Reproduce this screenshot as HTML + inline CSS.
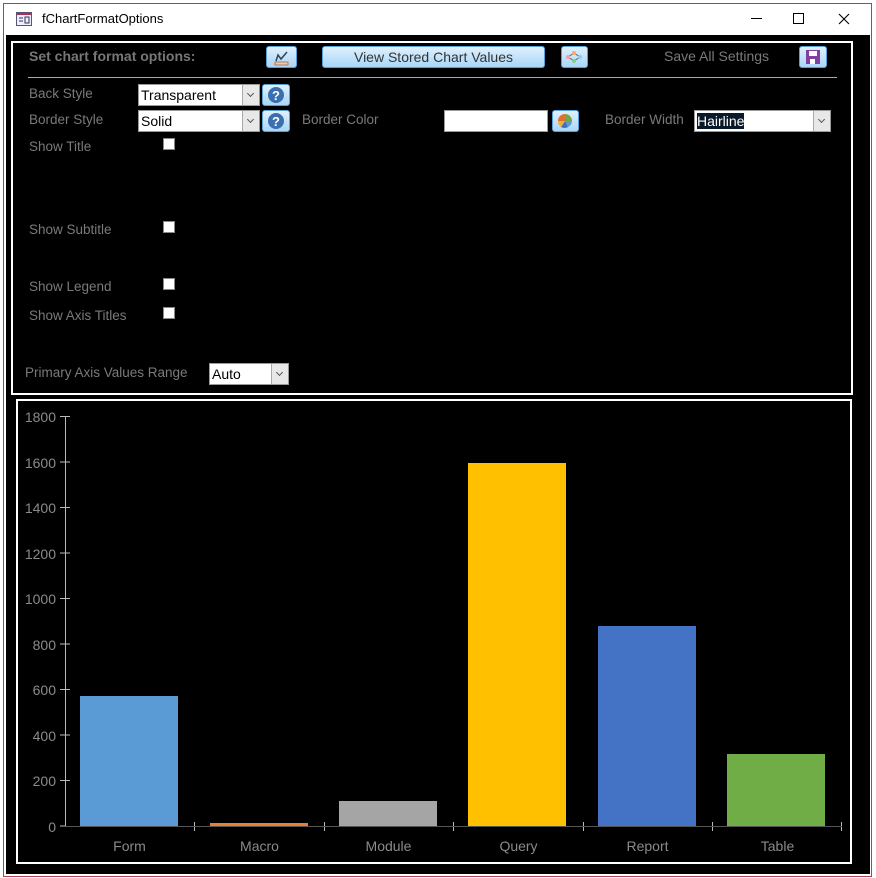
<!DOCTYPE html>
<html><head><meta charset="utf-8"><style>
*{margin:0;padding:0;box-sizing:border-box}
body{width:876px;height:878px;background:#fff;position:relative;overflow:hidden;font-family:"Liberation Sans",sans-serif}
.a{position:absolute}
.lbl{position:absolute;color:#7a7a7a;font-size:13.5px;white-space:nowrap}
.cb{position:absolute;width:12px;height:12px;background:#fff;border:1px solid #888}
.sel{position:absolute;background:#fff;border:1px solid #999;height:22px;font-size:14px;color:#000;padding:2px 0 0 2px}
.sel .dd{position:absolute;right:0;top:0;width:17px;height:20px;background:#e8e8e8;border-left:1px solid #aaa}
.sel .dd:after{content:"";position:absolute;left:5px;top:6px;width:4px;height:4px;border-right:1px solid #555;border-bottom:1px solid #555;transform:rotate(45deg)}
.btn{position:absolute;height:22px;border:1px solid #5aa0d8;border-radius:3px;background:linear-gradient(#dff0fd,#a9d6f7);}
.yl{position:absolute;color:#8a8a8a;font-size:14px;text-align:right;width:40px;left:16px}
.xl{position:absolute;color:#8a8a8a;font-size:14px;text-align:center;width:129px;top:838px}
</style></head><body>
<div class="a" style="left:3px;top:3px;width:869px;height:874px;border:1px solid #b04050"></div>
<div class="a" style="left:4px;top:4px;width:867px;height:31px;background:#fff"></div>
<svg class="a" style="left:16px;top:12px" width="16" height="14"><rect x="0.5" y="0.5" width="15" height="13" fill="#eef" stroke="#557"/><rect x="1" y="1" width="14" height="2" fill="#a35"/><path d="M3 6h4M3 9h4M9 5h4v6h-4z" stroke="#335" fill="none"/></svg>
<div class="a" style="left:42px;top:11px;font-size:13px;color:#000">fChartFormatOptions</div>
<div class="a" style="left:751px;top:18px;width:11px;height:1px;background:#000"></div>
<div class="a" style="left:793px;top:13px;width:11px;height:11px;border:1px solid #000"></div>
<svg class="a" style="left:838px;top:13px" width="12" height="12"><path d="M1 1L11 11M11 1L1 11" stroke="#000" stroke-width="1.1"/></svg>
<div class="a" style="left:6px;top:35px;width:864px;height:839px;background:#000"></div>
<div class="a" style="left:11px;top:41px;width:842px;height:354px;border:2px solid #fff"></div>
<div class="lbl" style="left:29px;top:48px;font-weight:bold;font-size:14px;color:#777">Set chart format options:</div>
<div class="btn" style="left:266px;top:46px;width:31px;height:22px"><svg width="29" height="20"><path d="M9 14l2-6 3 4 6-7" stroke="#345" fill="none" stroke-width="1.5"/><rect x="8" y="15" width="13" height="3" fill="none" stroke="#e07020"/></svg></div>
<div class="btn" style="left:322px;top:46px;width:223px;height:22px;text-align:center;font-size:14px;color:#333;line-height:20px">View Stored Chart Values</div>
<div class="btn" style="left:561px;top:46px;width:27px;height:22px"><svg width="25" height="20"><path d="M6 10l6-4 6 4-6 4z" stroke="#666" fill="none"/><circle cx="6" cy="10" r="2" fill="#f9a"/><circle cx="12" cy="6" r="2" fill="#fa6"/><circle cx="18" cy="10" r="2" fill="#8cf"/><circle cx="12" cy="14" r="2" fill="#8c8"/></svg></div>
<div class="lbl" style="left:664px;top:48px;font-size:14px">Save All Settings</div>
<div class="btn" style="left:799px;top:46px;width:28px;height:22px"><svg width="26" height="20"><rect x="6" y="3" width="14" height="14" fill="#8040a0"/><rect x="9" y="4" width="8" height="5" fill="#fff"/><rect x="10" y="12" width="5" height="5" fill="#fff"/></svg></div>
<div class="a" style="left:28px;top:77px;width:809px;height:1px;background:#aaa"></div>
<div class="lbl" style="left:29px;top:86px">Back Style</div>
<div class="sel" style="left:138px;top:84px;width:122px">Transparent<div class="dd"></div></div>
<div class="btn" style="left:262px;top:84px;width:28px;height:22px"><svg width="26" height="20"><circle cx="13" cy="10" r="8" fill="#3a6fb0"/><text x="13" y="15" fill="#fff" font-size="13" font-weight="bold" text-anchor="middle" font-family="Liberation Sans">?</text></svg></div>
<div class="lbl" style="left:29px;top:112px">Border Style</div>
<div class="sel" style="left:138px;top:110px;width:122px">Solid<div class="dd"></div></div>
<div class="btn" style="left:262px;top:110px;width:28px;height:22px"><svg width="26" height="20"><circle cx="13" cy="10" r="8" fill="#3a6fb0"/><text x="13" y="15" fill="#fff" font-size="13" font-weight="bold" text-anchor="middle" font-family="Liberation Sans">?</text></svg></div>
<div class="lbl" style="left:302px;top:112px">Border Color</div>
<div class="a" style="left:444px;top:110px;width:104px;height:22px;background:#fff;border:1px solid #999"></div>
<div class="btn" style="left:552px;top:110px;width:27px;height:22px"><svg width="25" height="20"><path d="M12 10L12 3A7 7 0 0 1 19 10z" fill="#70a848"/><path d="M12 10L19 10A7 7 0 0 1 15 16z" fill="#5b9bd5"/><path d="M12 10L15 16A7 7 0 0 1 8 16z" fill="#4070c0"/><path d="M12 10L8 16A7 7 0 0 1 5 10z" fill="#f0b030"/><path d="M12 10L5 10A7 7 0 0 1 12 3z" fill="#e07030"/></svg></div>
<div class="lbl" style="left:605px;top:112px">Border Width</div>
<div class="sel" style="left:694px;top:110px;width:137px"><span style="background:#0a1a2a;color:#fff">Hairline</span><div class="dd"></div></div>
<div class="lbl" style="left:29px;top:139px">Show Title</div>
<div class="cb" style="left:163px;top:138px"></div>
<div class="lbl" style="left:29px;top:222px">Show Subtitle</div>
<div class="cb" style="left:163px;top:221px"></div>
<div class="lbl" style="left:29px;top:279px">Show Legend</div>
<div class="cb" style="left:163px;top:278px"></div>
<div class="lbl" style="left:29px;top:308px">Show Axis Titles</div>
<div class="cb" style="left:163px;top:307px"></div>
<div class="lbl" style="left:25px;top:365px">Primary Axis Values Range</div>
<div class="sel" style="left:209px;top:363px;width:80px">Auto<div class="dd"></div></div>
<div class="a" style="left:16px;top:399px;width:836px;height:465px;border:2px solid #fff"></div>
<svg class="a" style="left:0;top:0" width="876" height="878">
<g stroke="#bbb" stroke-width="1"><line x1="65.5" y1="416" x2="65.5" y2="826"/>
<line x1="60" y1="416.5" x2="70" y2="416.5"/><line x1="60" y1="462" x2="70" y2="462"/><line x1="60" y1="507.5" x2="70" y2="507.5"/><line x1="60" y1="553" x2="70" y2="553"/><line x1="60" y1="598.5" x2="70" y2="598.5"/><line x1="60" y1="644" x2="70" y2="644"/><line x1="60" y1="689.5" x2="70" y2="689.5"/><line x1="60" y1="735" x2="70" y2="735"/><line x1="60" y1="780.5" x2="70" y2="780.5"/><line x1="60" y1="826" x2="65" y2="826"/>
<line x1="194.5" y1="822" x2="194.5" y2="831"/><line x1="324.5" y1="822" x2="324.5" y2="831"/><line x1="453.5" y1="822" x2="453.5" y2="831"/><line x1="583.5" y1="822" x2="583.5" y2="831"/><line x1="712.5" y1="822" x2="712.5" y2="831"/><line x1="841.5" y1="822" x2="841.5" y2="831"/></g>
<rect x="80" y="696" width="98" height="130" fill="#5b9bd5"/>
<rect x="210" y="823" width="98" height="3" fill="#ed7d31"/>
<rect x="339" y="801" width="98" height="25" fill="#a5a5a5"/>
<rect x="468" y="463" width="98" height="363" fill="#ffc000"/>
<rect x="598" y="626" width="98" height="200" fill="#4472c4"/>
<rect x="727" y="754" width="98" height="72" fill="#70ad47"/>
<line x1="65" y1="826.5" x2="842" y2="826.5" stroke="#555"/>
</svg>
<div class="yl" style="top:409px">1800</div><div class="yl" style="top:455px">1600</div><div class="yl" style="top:500px">1400</div><div class="yl" style="top:546px">1200</div><div class="yl" style="top:591px">1000</div><div class="yl" style="top:637px">800</div><div class="yl" style="top:682px">600</div><div class="yl" style="top:728px">400</div><div class="yl" style="top:773px">200</div><div class="yl" style="top:819px">0</div>
<div class="xl" style="left:65px">Form</div><div class="xl" style="left:195px">Macro</div><div class="xl" style="left:324px">Module</div><div class="xl" style="left:454px">Query</div><div class="xl" style="left:583px">Report</div><div class="xl" style="left:713px">Table</div>
</body></html>
